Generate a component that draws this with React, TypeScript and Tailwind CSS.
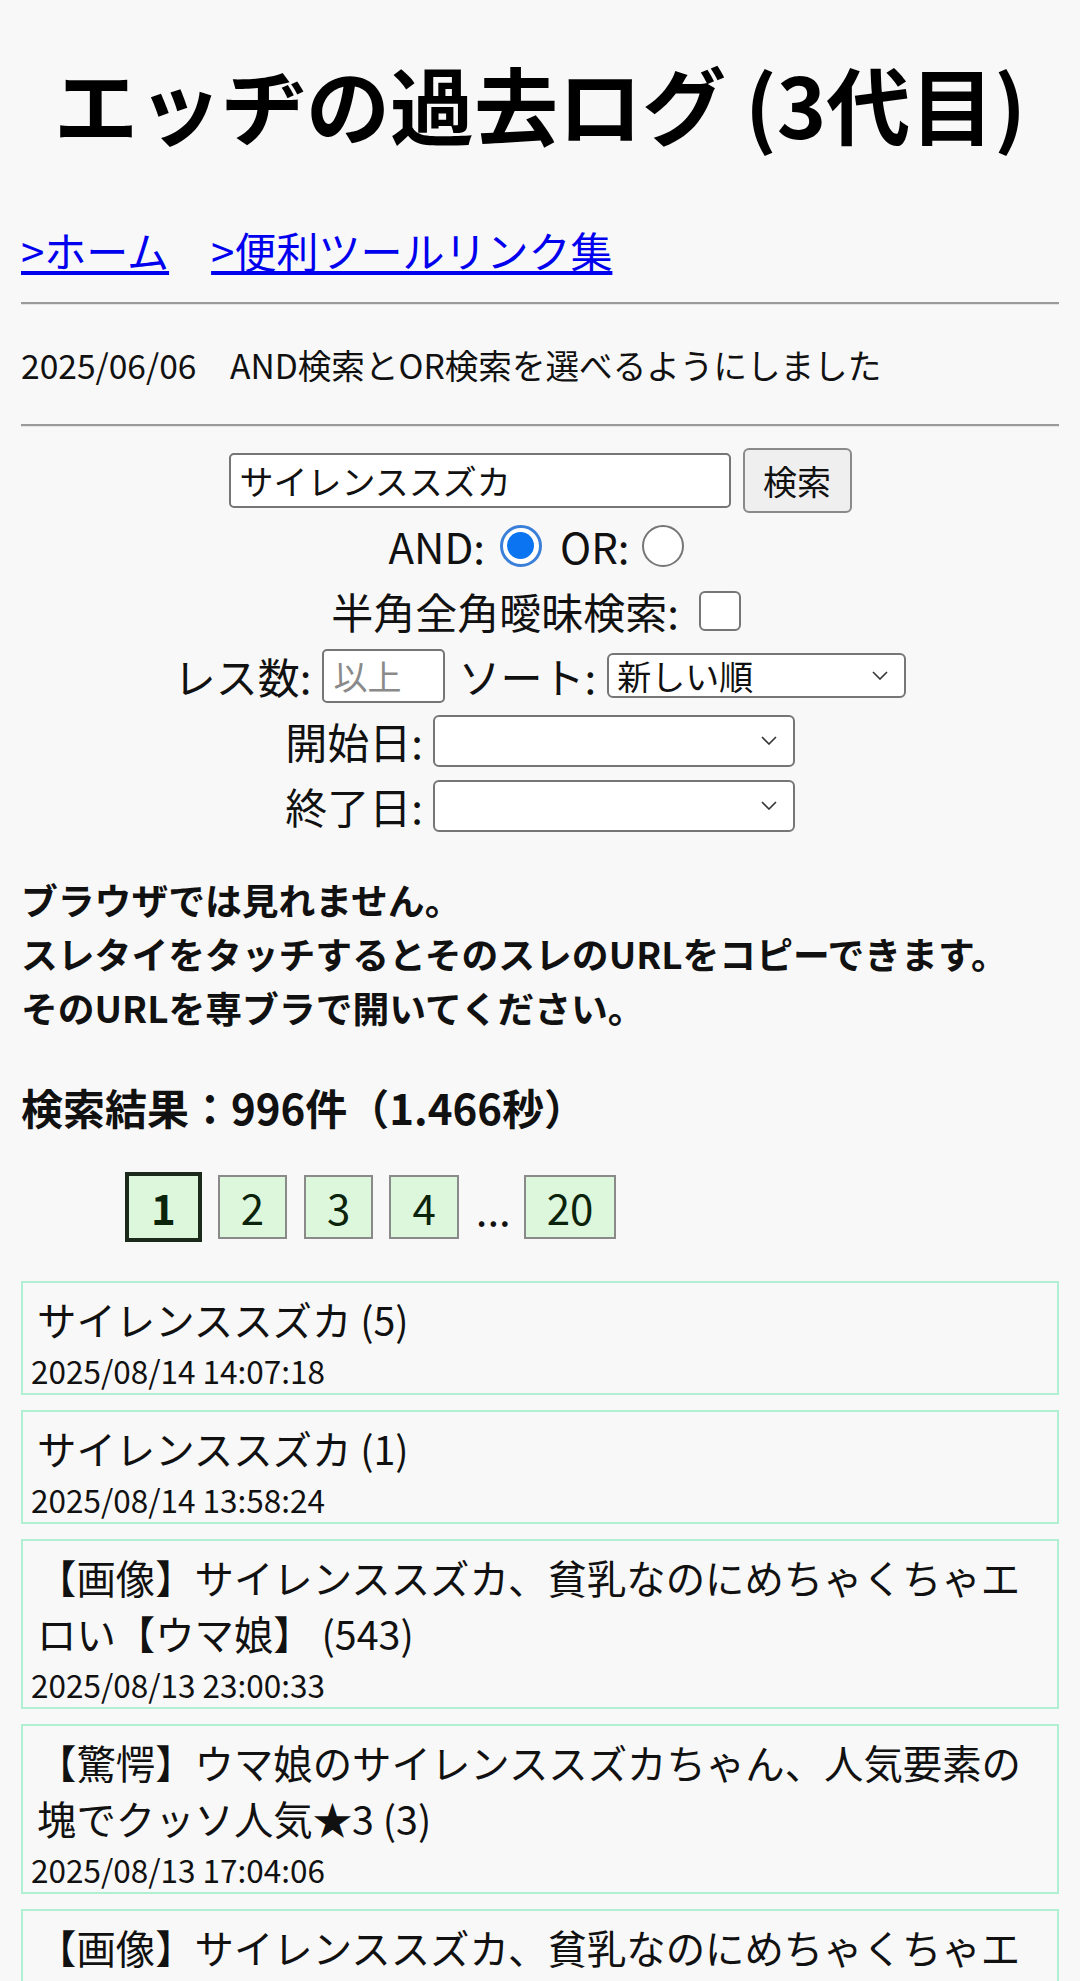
import React from "react";

const cards = [
  { title: "サイレンススズカ (5)", date: "2025/08/14 14:07:18" },
  { title: "サイレンススズカ (1)", date: "2025/08/14 13:58:24" },
  { title: "【画像】サイレンススズカ、貧乳なのにめちゃくちゃエロい【ウマ娘】 (543)", date: "2025/08/13 23:00:33" },
  { title: "【驚愕】ウマ娘のサイレンススズカちゃん、人気要素の塊でクッソ人気★3 (3)", date: "2025/08/13 17:04:06" },
  { title: "【画像】サイレンススズカ、貧乳なのにめちゃくちゃエロい【ウマ娘】 (12)", date: "2025/08/13 12:41:09" },
];

function Chevron() {
  return (
    <svg width="16" height="9" viewBox="0 0 16 9" fill="none">
      <polyline points="1,1 8,8 15,1" stroke="#333" strokeWidth="1.6" />
    </svg>
  );
}

function Select({ w, h, value }: { w: string; h: string; value?: string }) {
  return (
    <div className={`${w} ${h} flex items-center justify-between bg-white border-2 border-[#767676] rounded-[6px] pl-[8px] pr-[16px] text-[34px]`}>
      <span>{value}</span>
      <Chevron />
    </div>
  );
}

export default function App() {
  return (
    <div className="min-h-screen bg-[#f8f8f8] px-[21px] pt-[42px] pb-[40px] font-['Noto_Sans_CJK_JP',sans-serif] text-[#111]">
      {/* title */}
      <h1 className="text-center text-[84px] leading-[122px] font-bold text-black">エッヂの過去ログ (3代目)</h1>

      <div className="mt-[55px] text-[42px] leading-[61px]">
        <a href="#" className="text-[#0000ee] underline">&gt;ホーム</a>
        <span>　</span>
        <a href="#" className="text-[#0000ee] underline">&gt;便利ツールリンク集</a>
      </div>

      <div className="mt-[22px] border-t-2 border-t-[#9a9a9a] border-b border-b-[#e4e4e4]" />

      <p className="mt-[35px] text-[33.6px] leading-[49px]">2025/06/06　AND検索とOR検索を選べるようにしました</p>

      <div className="mt-[35px] border-t-2 border-t-[#9a9a9a] border-b border-b-[#e4e4e4]" />

      {/* search form */}
      <div className="mt-[21px] flex flex-col items-center text-[42px] leading-[61px]">
        <div className="h-[65px] flex items-center gap-[12px]">
          <div className="w-[502px] h-[55px] bg-white border-2 border-[#767676] rounded-[5px] pl-[9px] flex items-center text-[34px]">
            サイレンススズカ
          </div>
          <button className="w-[109px] h-[65px] bg-[#efefef] border-2 border-[#8a8a8a] rounded-[6px] text-[34px]">検索</button>
        </div>

        <div className="h-[65px] flex items-center">
          <span>AND:</span>
          <div className="ml-[15px] w-[42px] h-[42px] rounded-full border-[3px] border-[#3a7fd8] bg-white flex items-center justify-center">
            <div className="w-[27px] h-[27px] rounded-full bg-[#0b74f0]" />
          </div>
          <span className="ml-[18px]">OR:</span>
          <div className="ml-[12px] mr-[8px] w-[42px] h-[42px] rounded-full border-2 border-[#767676] bg-white" />
        </div>

        <div className="h-[65px] flex items-center">
          <span>半角全角曖昧検索:</span>
          <div className="ml-[20px] mr-[8px] w-[42px] h-[40px] rounded-[6px] border-2 border-[#767676] bg-white" />
        </div>

        <div className="h-[65px] flex items-center">
          <span>レス数:</span>
          <div className="ml-[10px] w-[123px] h-[54px] bg-white border-2 border-[#767676] rounded-[5px] pl-[10px] flex items-center text-[34px] text-[#8a8a8a]">
            以上
          </div>
          <span className="ml-[14px]">ソート:</span>
          <div className="ml-[11px]">
            <Select w="w-[299px]" h="h-[45px]" value="新しい順" />
          </div>
        </div>

        <div className="h-[65px] flex items-center">
          <span>開始日:</span>
          <div className="ml-[10px]">
            <Select w="w-[362px]" h="h-[52px]" />
          </div>
        </div>

        <div className="h-[65px] flex items-center">
          <span>終了日:</span>
          <div className="ml-[10px]">
            <Select w="w-[362px]" h="h-[52px]" />
          </div>
        </div>
      </div>

      <div className="mt-[34px] text-[36.8px] leading-[54px] font-bold">
        <p>ブラウザでは見れません。</p>
        <p>スレタイをタッチするとそのスレのURLをコピーできます。</p>
        <p>そのURLを専ブラで開いてください。</p>
      </div>

      <h2 className="mt-[42px] text-[42px] leading-[61px] font-bold">検索結果：996件（1.466秒）</h2>

      {/* pager */}
      <div className="mt-[35px] pl-[104px] flex items-center text-[42px] text-[#0b230b]">
        <span className="border-4 border-[#1c2a1c] bg-[#ddf7dd] px-[22px] leading-[62px] font-bold">1</span>
        <span className="ml-[16px] border-2 border-[#8a8a8a] bg-[#ddf7dd] px-[21px] leading-[60px]">2</span>
        <span className="ml-[17px] border-2 border-[#8a8a8a] bg-[#ddf7dd] px-[21px] leading-[60px]">3</span>
        <span className="ml-[16px] border-2 border-[#8a8a8a] bg-[#ddf7dd] px-[21px] leading-[60px]">4</span>
        <span className="ml-[17px] text-[#111]">...</span>
        <span className="ml-[13px] border-2 border-[#8a8a8a] bg-[#ddf7dd] px-[21px] leading-[60px]">20</span>
      </div>

      {/* results */}
      <div className="mt-[39px] flex flex-col gap-[15px]">
        {cards.map((c, i) => (
          <div key={i} className="border-2 border-[#b0efd2] pt-[8px] pl-[8px] pr-[8px]">
            <div className="pl-[6px] text-[39.4px] leading-[56px]">{c.title}</div>
            <div className="text-[31.5px] leading-[46px]">{c.date}</div>
          </div>
        ))}
      </div>
    </div>
  );
}
